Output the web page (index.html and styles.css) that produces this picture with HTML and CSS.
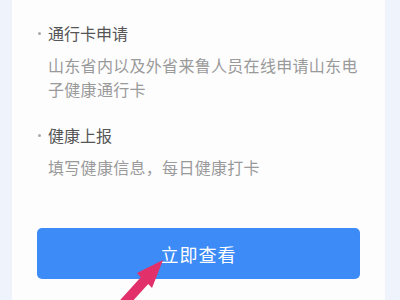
FILE: index.html
```html
<!DOCTYPE html>
<html lang="zh-CN">
<head>
    <meta charset="UTF-8">
    <title>通行卡申请</title>
    <link rel="stylesheet" href="styles.css">
</head>
<body>
    <div class="card">
        <div class="item">
            <div class="item-title">通行卡申请</div>
            <div class="item-desc">山东省内以及外省来鲁人员在线申请山东电子健康通行卡</div>
        </div>
        <div class="item">
            <div class="item-title">健康上报</div>
            <div class="item-desc">填写健康信息，每日健康打卡</div>
        </div>
        <button class="btn-view">立即查看</button>
    </div>

    <!-- 指示箭头 -->
    <svg class="pointer" width="400" height="300" viewBox="0 0 400 300">
        <polygon fill="#e2306b" points="163,260 152,288 148.2,283.9 117,318.4 109.6,311.7 140.8,277.2 137,273"/>
    </svg>
</body>
</html>
```

FILE: styles.css
```css
body {
    margin: 0;
    width: 400px;
    height: 300px;
    overflow: hidden;
    position: relative;
    background: #eef3fc;
    font-family: "Noto Sans CJK SC", "Noto Sans", sans-serif;
}

.card {
    margin: 0 15px 0 12px;
    height: 300px;
    background: #fdfdfe;
    padding: 21px 25px 0 25px;
    box-sizing: border-box;
}

.item {
    padding-left: 11px;
    margin-bottom: 22px;
}

.item-title {
    position: relative;
    font-size: 16px;
    line-height: 24px;
    color: #555;
}

.item-title::before {
    content: "";
    position: absolute;
    left: -10px;
    top: 11px;
    width: 3px;
    height: 3px;
    border-radius: 50%;
    background: #aaa;
}

.item-desc {
    margin-top: 8px;
    font-size: 16px;
    line-height: 24px;
    letter-spacing: 0.3px;
    color: #9a9a9a;
}

.btn-view {
    display: block;
    width: 100%;
    height: 51px;
    margin-top: 49px;
    border: none;
    border-radius: 5px;
    background: #3d8bf7;
    color: #fff;
    font-family: inherit;
    font-size: 18px;
    letter-spacing: 1px;
}

.pointer {
    position: absolute;
    left: 0;
    top: 0;
}
```
